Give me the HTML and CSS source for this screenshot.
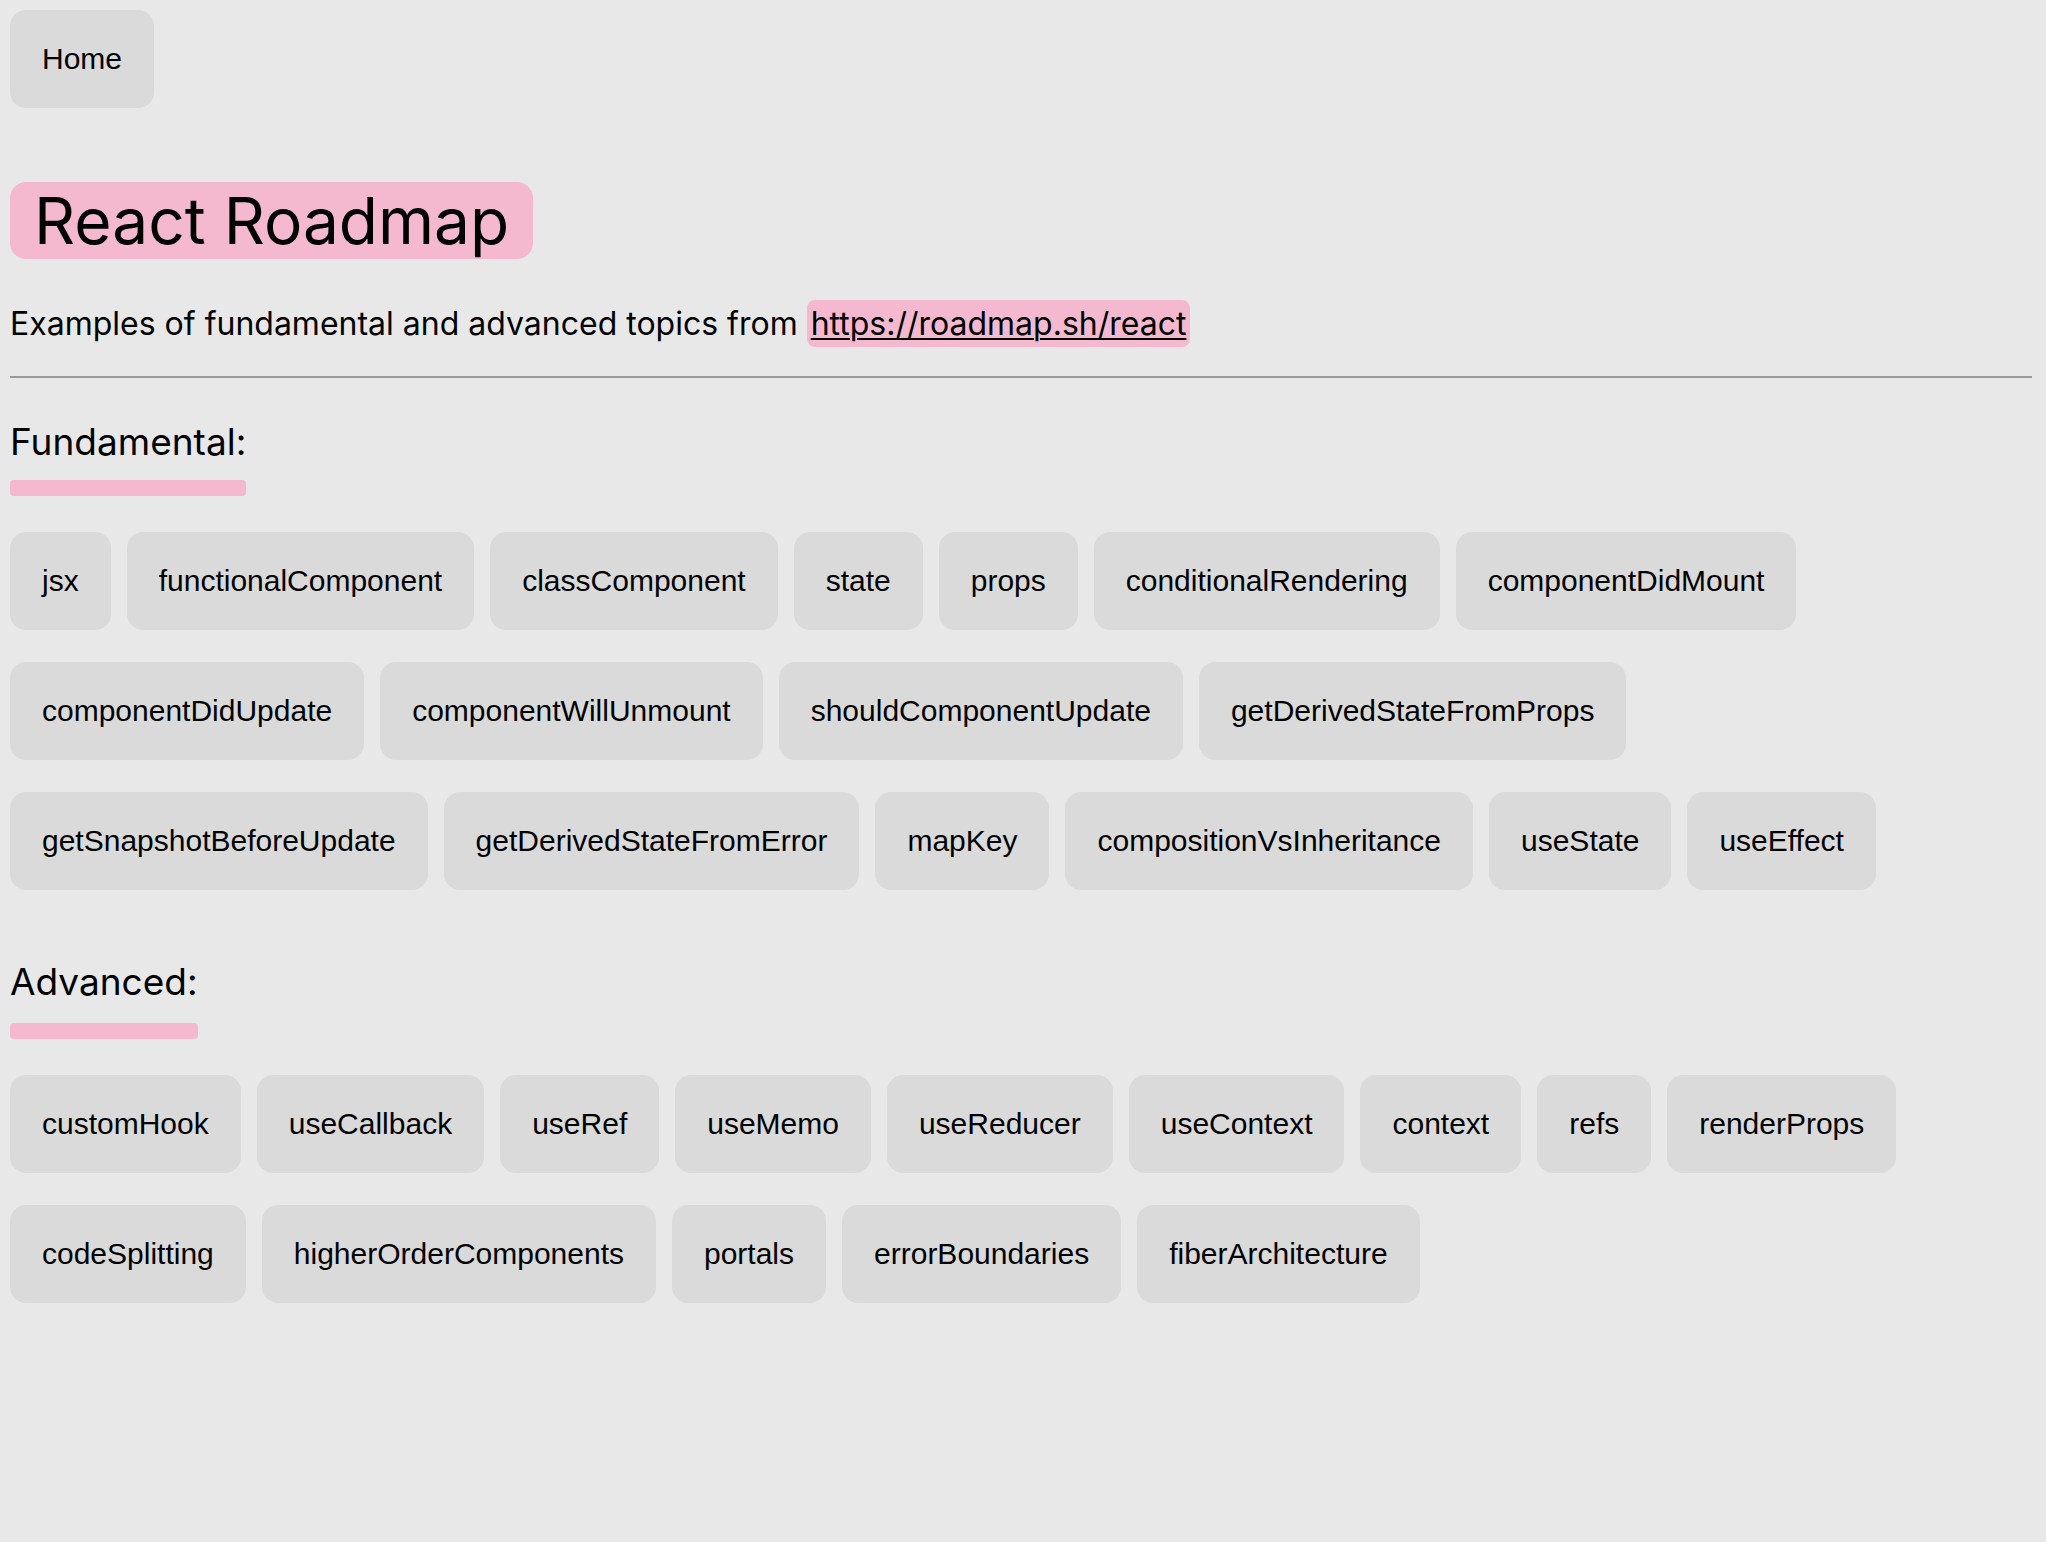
FILE: index.html
```html
<!DOCTYPE html>
<html lang="en">
<head>
<meta charset="utf-8">
<title>React Roadmap</title>
<link rel="stylesheet" href="styles.css">
</head>
<body>
<nav class="nav">
  <button class="btn" type="button">Home</button>
</nav>
<header class="intro">
  <h1 class="title">React Roadmap</h1>
  <p class="lead">Examples of fundamental and advanced topics from <a class="lead-link" href="https://roadmap.sh/react">https://roadmap.sh/react</a></p>
</header>
<hr class="divider">
<main>
  <section class="topic">
    <h2 class="topic-title">Fundamental:</h2>
    <div class="topic-list">
      <button class="btn" type="button">jsx</button>
      <button class="btn" type="button">functionalComponent</button>
      <button class="btn" type="button">classComponent</button>
      <button class="btn" type="button">state</button>
      <button class="btn" type="button">props</button>
      <button class="btn" type="button">conditionalRendering</button>
      <button class="btn" type="button">componentDidMount</button>
      <button class="btn" type="button">componentDidUpdate</button>
      <button class="btn" type="button">componentWillUnmount</button>
      <button class="btn" type="button">shouldComponentUpdate</button>
      <button class="btn" type="button">getDerivedStateFromProps</button>
      <button class="btn" type="button">getSnapshotBeforeUpdate</button>
      <button class="btn" type="button">getDerivedStateFromError</button>
      <button class="btn" type="button">mapKey</button>
      <button class="btn" type="button">compositionVsInheritance</button>
      <button class="btn" type="button">useState</button>
      <button class="btn" type="button">useEffect</button>
    </div>
  </section>
  <section class="topic topic-next">
    <h2 class="topic-title">Advanced:</h2>
    <div class="topic-list">
      <button class="btn" type="button">customHook</button>
      <button class="btn" type="button">useCallback</button>
      <button class="btn" type="button">useRef</button>
      <button class="btn" type="button">useMemo</button>
      <button class="btn" type="button">useReducer</button>
      <button class="btn" type="button">useContext</button>
      <button class="btn" type="button">context</button>
      <button class="btn" type="button">refs</button>
      <button class="btn" type="button">renderProps</button>
      <button class="btn" type="button">codeSplitting</button>
      <button class="btn" type="button">higherOrderComponents</button>
      <button class="btn" type="button">portals</button>
      <button class="btn" type="button">errorBoundaries</button>
      <button class="btn" type="button">fiberArchitecture</button>
    </div>
  </section>
</main>
</body>
</html>
```

FILE: styles.css
```css
html {
  background: #e8e8e8;
}

body {
  margin: 10px 14px 10px 10px;
  background: #e8e8e8;
  color: #000;
  font-family: Inter, "Noto Sans", sans-serif;
}

.nav {
  display: flex;
}

.btn {
  font-family: "Liberation Sans", Arial, sans-serif;
  font-size: 30px;
  line-height: 34px;
  padding: 32px;
  border: 0;
  border-radius: 16px;
  background: #dadada;
  color: #000;
  cursor: pointer;
}

.intro {
  display: flex;
  flex-direction: column;
  align-items: flex-start;
}

.title {
  margin: 74px 0 0;
  padding: 0 24px;
  font-size: 64px;
  font-weight: 400;
  line-height: 77px;
  background: #f4b9cf;
  border-radius: 16px;
}

.lead {
  margin: 45px 0 0;
  font-size: 32px;
  line-height: 39px;
}

.lead-link {
  color: #000;
  background: #f4b9cf;
  padding: 4px;
  border-radius: 8px;
  text-decoration-thickness: 2px;
  text-underline-offset: 3px;
}

.divider {
  margin: 33px 0 0;
  height: 2px;
  border: 0;
  background: #9a9a9a;
}

.topic {
  display: flex;
  flex-direction: column;
  align-items: flex-start;
}

.topic-title {
  margin: 41px 0 0;
  font-size: 37px;
  font-weight: 400;
  line-height: 45px;
}

.topic-title::after {
  content: "";
  display: block;
  height: 16px;
  margin-top: 16px;
  border-radius: 4px;
  background: #f4b9cf;
}

.topic-list {
  display: flex;
  flex-wrap: wrap;
  gap: 32px 16px;
  margin-top: 36px;
}

.topic-next .topic-title {
  margin-top: 69px;
}

.topic-next .topic-title::after {
  margin-top: 19px;
}
```
